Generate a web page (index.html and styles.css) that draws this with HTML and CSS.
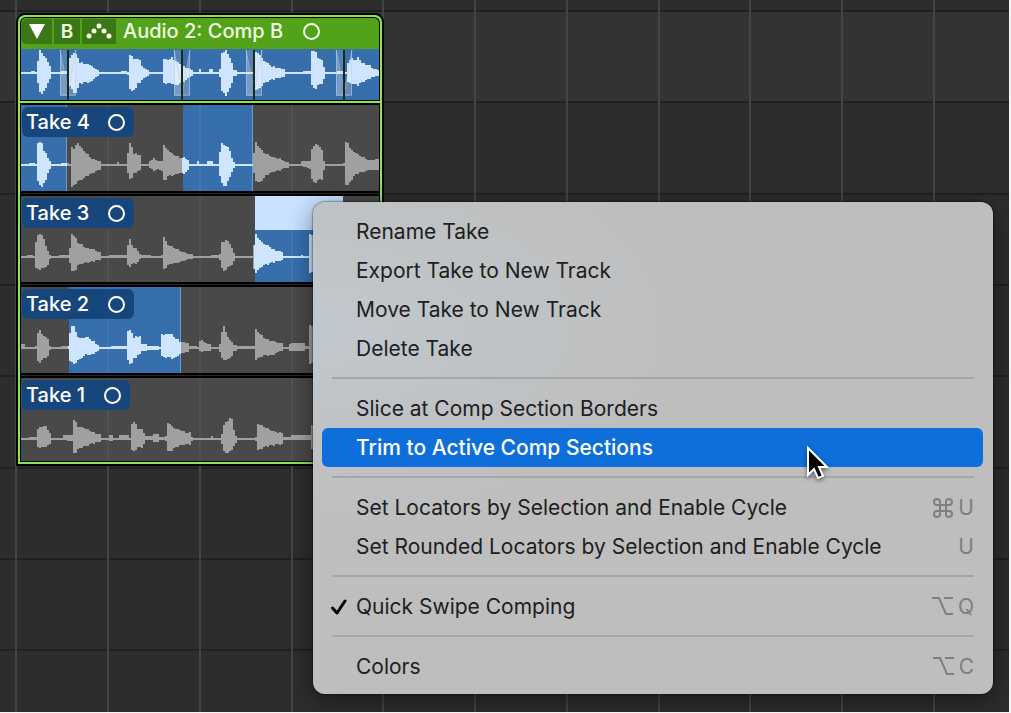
FILE: index.html
```html
<!DOCTYPE html>
<html lang="en">
<head>
<meta charset="utf-8">
<title>Take folder</title>
<link rel="stylesheet" href="styles.css">
</head>
<body>
<main class="workspace">
  <section class="folder">
    <header class="folder-head">
      <div class="tools">
        <button class="tool tool-fold" aria-label="Collapse folder"><svg width="16" height="15" viewBox="0 0 16 15"><path d="M0 0h16L8 15z" fill="#fff"/></svg></button>
        <button class="tool tool-comp">B</button>
        <button class="tool tool-swipe" aria-label="Quick Swipe Comping"><svg width="26" height="16" viewBox="0 0 26 16" fill="#f2ffe6"><circle cx="3" cy="13" r="2.5"/><circle cx="8" cy="8" r="2.5"/><circle cx="13" cy="3" r="2.5"/><circle cx="18" cy="8" r="2.5"/><circle cx="23" cy="13" r="2.5"/></svg></button>
      </div>
      <h1 class="folder-title">Audio 2: Comp B</h1>
      <span class="ring ring-head"></span>
    </header>
    <div class="comp">
      <svg class="wave" width="358" height="51" data-mid="24" data-lit="0-358" data-wave="21,1,1 30,2,1 34,1,1 36,2,1 37,12,10 39,22,18 40,22,22 42,18,20 45,14,14 48,9,8 50,4,4 51,1,1 60,2,1 66,1,1 68,12,10 71,18,16 73,20,20 76,17,18 79,10,10 84,9,9 89,8,9 93,5,6 96,3,3 99,1,1 107,1,1 120,2,1 127,1,2 128,17,14 131,17,18 134,12,16 137,14,10 140,12,10 141,6,6 147,3,3 149,1,1 161,1,1 162,14,10 167,13,10 171,15,10 176,11,12 181,7,9 186,5,6 190,3,3 192,1,1 197,1,1 199,4,1 201,1,1 208,1,1 209,4,1 212,1,1 219,4,4 221,20,18 225,22,22 229,15,15 231,9,9 233,3,3 236,1,1 253,1,1 255,20,16 258,20,16 262,12,11 266,10,8 271,6,6 276,5,5 283,4,4 284,1,1 299,1,1 303,2,1 310,1,1 311,22,12 314,22,16 317,15,12 321,12,10 323,6,6 325,1,1 336,2,1 344,1,1 346,8,8 350,14,10 354,12,11 357,15,12 362,9,8 367,8,6 371,5,4 377,3,3 380,3,3"></svg>
      <svg class="fades" width="358" height="51" viewBox="0 0 358 51">
        <defs><g id="fade"><path d="M-8 1h8v46h-8z" fill="#fff" fill-opacity=".14"/><path d="M-8 1L0 47h-8zM8 1v46H0z" fill="#fff" fill-opacity=".2"/><path d="M-7.500 1v45h15V1M-8 1L1 46M8 1L0 46" fill="none" stroke="#b9cce0" stroke-opacity=".55"/><path d="M0 1v50" stroke="#1d2b12" stroke-width="2"/></g></defs>
        <use href="#fade" x="47"/><use href="#fade" x="161"/><use href="#fade" x="233"/><use href="#fade" x="323"/>
      </svg>
    </div>
    <div class="takes">
      <article class="take">
        <svg class="wave" width="358" height="86" data-mid="60" data-lit="0-46 162-232" data-wave="21,1,1 29,2,1 35,1,1 36,8,8 37,22,16 41,22,22 43,14,18 46,10,12 48,4,4 50,1,1 60,2,1 69,1,1 70,8,9 71,18,22 73,16,20 77,22,16 81,16,14 85,12,11 91,6,8 97,4,5 101,1,1 115,1,1 116,3,1 118,1,1 126,4,5 128,20,10 130,22,16 133,11,8 139,10,5 140,1,1 148,1,1 149,4,3 153,6,5 157,4,4 161,4,6 162,22,16 165,16,14 168,14,10 172,10,10 178,7,8 183,7,8 187,5,5 188,1,1 196,1,1 197,4,1 199,1,1 205,1,1 206,4,1 212,1,1 218,4,5 220,22,16 222,22,20 224,18,22 228,18,14 230,9,9 232,3,3 235,1,1 252,1,1 253,12,8 255,22,15 258,18,18 262,12,14 266,11,9 271,8,7 278,6,5 284,3,3 288,1,1 299,1,1 300,4,1 306,4,2 310,4,4 311,16,14 314,20,18 318,20,14 321,14,14 323,4,5 324,1,1 333,1,1 342,2,1 344,22,18 347,22,20 350,14,15 355,12,9 360,8,7 367,5,5 373,5,5 380,7,5"></svg>
        <button class="tag">Take 4<span class="ring"></span></button>
      </article>
      <article class="take">
        <svg class="wave" width="358" height="86" data-mid="61" data-lit="234-322" data-wave="21,1,1 26,2,1 33,1,1 34,8,9 36,22,12 42,22,11 44,14,10 46,6,8 48,2,2 50,1,1 58,2,1 68,1,1 69,8,5 71,23,14 74,20,14 77,14,8 82,11,6 87,8,5 91,8,4 96,5,3 100,1,1 108,2,1 126,1,1 127,12,8 129,17,9 132,10,6 136,7,6 139,3,2 141,2,1 150,1,1 160,2,1 162,22,12 164,18,11 166,12,8 172,10,6 178,6,5 183,5,4 188,3,2 192,1,1 197,1,1 198,6,1 199,1,1 211,2,1 219,3,3 221,15,11 223,15,14 227,16,10 230,11,9 232,4,4 234,1,1 251,1,1 253,12,12 255,22,15 258,18,12 261,14,9 266,12,7 272,7,5 281,5,3 283,1,1 300,2,1 303,1,1 308,2,1 309,22,15 320,22,15 380,1,1"></svg>
        <div class="range-pick"></div>
        <button class="tag">Take 3<span class="ring"></span></button>
      </article>
      <article class="take">
        <svg class="wave" width="358" height="86" data-mid="61" data-lit="48-160" data-wave="21,4,1 24,1,1 35,2,1 36,14,12 39,17,14 42,13,11 46,9,8 49,2,2 51,1,1 60,2,1 68,1,1 69,14,12 71,22,14 73,22,16 76,11,13 80,9,10 85,11,6 90,8,7 96,3,3 99,1,1 110,2,1 126,1,1 127,17,12 130,17,17 133,10,10 139,12,6 140,4,3 146,2,2 159,1,1 160,15,8 164,12,9 168,15,9 173,11,10 179,6,6 184,5,4 189,2,1 197,1,1 198,7,3 201,7,3 207,4,3 211,1,1 219,4,4 221,16,10 223,22,12 226,12,11 230,6,9 233,3,3 237,2,1 254,1,1 255,18,11 259,14,9 264,9,7 270,7,7 278,5,3 282,1,1 288,1,1 289,4,3 293,5,3 304,2,1 309,22,15 320,22,15 380,1,1"></svg>
        <button class="tag">Take 2<span class="ring"></span></button>
      </article>
      <article class="take take-last">
        <svg class="wave" width="358" height="83" data-mid="61" data-lit="" data-wave="21,1,1 28,2,1 36,2,1 37,10,8 42,13,8 46,11,7 49,6,5 51,1,1 61,1,1 62,4,1 71,4,2 72,19,12 74,18,15 77,12,10 84,11,7 90,7,4 96,5,3 100,1,1 108,1,1 109,4,2 112,1,1 118,1,1 119,4,1 128,1,1 130,14,10 133,17,12 137,10,8 142,9,8 144,3,1 152,1,1 153,5,3 158,2,1 165,3,2 166,16,12 168,16,12 172,11,10 178,9,6 184,6,5 190,2,2 192,1,1 199,1,1 200,7,4 201,1,1 211,3,1 213,1,1 220,1,1 221,5,5 223,14,12 227,18,14 230,22,11 232,15,9 234,3,4 236,1,1 255,2,2 256,16,12 259,14,10 264,11,7 271,8,6 277,6,5 283,2,1 290,4,1 310,2,1 311,14,10 320,14,10 380,1,1"></svg>
        <button class="tag tag-short">Take 1<span class="ring"></span></button>
      </article>
    </div>
  </section>

  <menu class="menu">
    <li><button class="item">Rename Take</button></li>
    <li><button class="item">Export Take to New Track</button></li>
    <li><button class="item">Move Take to New Track</button></li>
    <li><button class="item">Delete Take</button></li>
    <li class="sep"></li>
    <li><button class="item">Slice at Comp Section Borders</button></li>
    <li><button class="item item-active">Trim to Active Comp Sections</button></li>
    <li class="sep"></li>
    <li><button class="item">Set Locators by Selection and Enable Cycle<kbd class="keys"><svg width="20" height="20" viewBox="0 0 20 20" fill="none" stroke="currentColor" stroke-width="2"><path d="M7 7h6v6H7zM7 7H4A3 3 0 1 1 7 4zM13 7V4a3 3 0 1 1 3 3zM13 13h3a3 3 0 1 1-3 3zM7 13v3a3 3 0 1 1-3-3z"/></svg>U</kbd></button></li>
    <li><button class="item">Set Rounded Locators by Selection and Enable Cycle<kbd class="keys">U</kbd></button></li>
    <li class="sep"></li>
    <li><button class="item"><svg class="tick" width="16" height="16" viewBox="0 0 16 16"><path d="M1.500 9L6 14 14 2" fill="none" stroke="#000" stroke-width="3" stroke-linecap="round" stroke-linejoin="round"/></svg>Quick Swipe Comping<kbd class="keys"><svg width="21" height="20" viewBox="0 0 21 20" fill="none" stroke="currentColor" stroke-width="2"><path d="M0 1h7l7 16h7M12 1h9"/></svg>Q</kbd></button></li>
    <li class="sep"></li>
    <li><button class="item">Colors<kbd class="keys"><svg width="21" height="20" viewBox="0 0 21 20" fill="none" stroke="currentColor" stroke-width="2"><path d="M0 1h7l7 16h7M12 1h9"/></svg>C</kbd></button></li>
  </menu>
  <svg class="pointer" width="26" height="38" viewBox="0 0 26 38"><path d="M2 3v27l6-6 4 9 5-2-4-9h8z" fill="#000" stroke="#fff" stroke-width="2"/></svg>
</main>
<script src="waves.js"></script>
</body>
</html>
```
FILE: styles.css
```css
* { box-sizing: border-box; }
body { margin: 0; background: #f4f4f4; font-family: Inter, "Liberation Sans", sans-serif; }
button { font: inherit; border: 0; margin: 0; padding: 0; }

.workspace {
  position: relative;
  min-height: calc(100vh - 1px);
  margin: 0 2px 1px 0;
  padding: 13px 0 0 16px;
  overflow: hidden;
  background-color: #2d2d2d;
  background-image:
    repeating-linear-gradient(to right, #444 0 2px, transparent 2px 92px, #444 92px 94px, transparent 94px 184px, #444 184px 186px, transparent 186px 276px, #444 276px 278px, transparent 278px 367px),
    repeating-linear-gradient(to bottom, #202020 0 2px, transparent 2px 91px, #202020 91px 93px, transparent 93px 183px, #202020 183px 185px, transparent 185px 274px),
    linear-gradient(to bottom, #2d2d2d 0 11px, #333 11px 102px, #2d2d2d 102px);
  background-position: 15px 0, 0 10px, 0 0;
}

.folder {
  width: 368px;
  padding: 2px;
  background: #86e853;
  border: 2px solid #000;
  border-radius: 9px 9px 0 0;
}
.folder-head {
  display: flex;
  align-items: center;
  height: 32px;
  padding: 0 0 5px;
  background: #52a31a;
  border: 1px solid #000;
  border-bottom: 0;
  border-radius: 6px 6px 0 0;
}
.tools { display: flex; gap: 2px; }
.tool { display: flex; align-items: center; justify-content: center; height: 25px; background: #3b7715; color: #f2ffe6; font-size: 19px; font-weight: 600; }
.tool-fold { width: 31px; border-radius: 6px 0 0 6px; }
.tool-comp { width: 26px; }
.tool-swipe { width: 34px; }
.folder-title { margin: 0 0 0 7px; color: #f2ffe6; font-size: 20px; font-weight: 500; line-height: 26px; white-space: nowrap; }
.ring { flex: none; width: 17px; height: 17px; border: 2px solid #fff; border-radius: 50%; }
.ring-head { margin-left: 20px; border-color: #f2ffe6; }

.comp { position: relative; height: 52px; background: #376fad; border: solid #000; border-width: 0 1px 1px; }
.wave { display: block; }
.fades { position: absolute; inset: 0; }

.takes { margin-top: 2px; padding-top: 1px; border: 1px solid #000; background: #262626; }
.take { position: relative; height: 86px; margin-bottom: 5px; overflow: hidden; background: #494949; box-shadow: 0 2px #000, 0 -2px #000; }
.take:first-child { box-shadow: 0 2px #000, 0 -1px #000; }
.take-last { height: 83px; margin-bottom: 0; box-shadow: 0 -2px #000; }
.tag {
  position: absolute;
  top: 2px;
  left: 1px;
  display: flex;
  align-items: center;
  justify-content: space-between;
  width: 112px;
  height: 30px;
  padding: 0 9px 0 4px;
  border-radius: 6px;
  background: #17467c;
  color: #fff;
  font-size: 20px;
  font-weight: 500;
}
.tag-short { width: 108px; }
.range-pick { position: absolute; top: 0; left: 234px; width: 88px; height: 34px; background: #c8e2ff; }

.menu {
  position: absolute;
  top: 202px;
  left: 313px;
  right: 16px;
  margin: 0;
  padding: 10px 10px 8px 9px;
  list-style: none;
  border-radius: 12px;
  background: radial-gradient(ellipse at 0 25%, #c1c8cd 0, #bebebe 40%);
  box-shadow: 0 0 2px #000, 0 6px 24px rgba(0, 0, 0, .45);
}
.item {
  position: relative;
  display: flex;
  align-items: center;
  width: 100%;
  height: 39px;
  padding: 0 9px 0 34px;
  border-radius: 6px;
  background: none;
  color: #202020;
  font-size: 21px;
  white-space: nowrap;
}
.item-active { background: #0f6fda; color: #fff; font-weight: 500; }
.sep { height: 21px; padding: 9px 9px 0 10px; }
.sep::before { content: ""; display: block; height: 2px; background: #a5a6a7; }
.keys { display: flex; align-items: center; gap: 5px; margin-left: auto; color: #7f7f7f; font: inherit; }
.tick { position: absolute; left: 9px; top: 12px; }
.pointer { position: absolute; left: 806px; top: 445px; filter: drop-shadow(0 2px 2px rgba(0, 0, 0, .5)); }
```
FILE: waves.js
```js
// Builds each waveform from "x,above,below" envelope points, in 2px columns.
const NS = "http://www.w3.org/2000/svg";
const ORIGIN = 21;

function add(svg, name, attrs) {
  const el = document.createElementNS(NS, name);
  for (const key in attrs) el.setAttribute(key, attrs[key]);
  svg.appendChild(el);
}

document.querySelectorAll(".wave").forEach((svg) => {
  const mid = Number(svg.dataset.mid);
  const height = Number(svg.getAttribute("height"));
  const points = svg.dataset.wave.split(" ").map((p) => p.split(",").map(Number));
  const lit = svg.dataset.lit ? svg.dataset.lit.split(" ").map((r) => r.split("-").map(Number)) : [];

  lit.forEach(([a, b]) => {
    add(svg, "rect", { x: a, y: 0, width: b - a, height, fill: "#376fad" });
    if (b < 358) add(svg, "rect", { x: b - 1, y: 0, width: 1, height, fill: "#6d9cce" });
  });
  if (mid > 30) {
    [86, 178, 270].forEach((x) => add(svg, "rect", { x, y: 0, width: 2, height, fill: "#fff", "fill-opacity": 0.05 }));
  }

  let on = "";
  let off = "";
  let i = 0;
  for (let x = 0; x < 358; x += 1) {
    const px = x - (x % 2) + ORIGIN;
    while (i < points.length - 2 && points[i + 1][0] <= px) i += 1;
    const [x0, t0, b0] = points[i];
    const [x1, t1, b1] = points[i + 1];
    const k = (px - x0) / (x1 - x0);
    const flat = t0 < 3 || t1 < 3;
    const ripple = t0 > 5 && Math.floor(x / 2) % 3 === 0 ? 1 : 0;
    const top = Math.round(flat ? t0 : t0 + (t1 - t0) * k) + ripple;
    const bottom = Math.round(flat ? b0 : b0 + (b1 - b0) * k) + ripple;
    const bar = `M${x} ${mid - top}h1v${top + bottom}h-1z`;
    if (lit.some(([a, b]) => x >= a - 1 && x < b)) on += bar;
    else off += bar;
  }
  add(svg, "path", { d: off, fill: "#a0a0a0", "shape-rendering": "crispEdges" });
  add(svg, "path", { d: on, fill: "#cfe5ff", "shape-rendering": "crispEdges" });
});
```
